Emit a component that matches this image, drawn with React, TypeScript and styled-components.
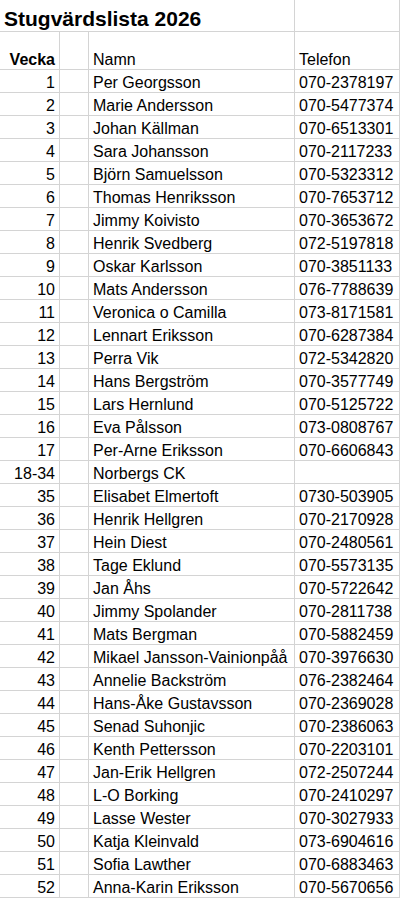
import React from "react";
import styled, { createGlobalStyle } from "styled-components";

const Global = createGlobalStyle`
  html, body { margin: 0; padding: 0; background: #ffffff; }
  body { font-family: "Liberation Sans", Arial, sans-serif; color: #000; }
`;

const Sheet = styled.div`
  display: grid;
  grid-template-columns: 60px 29px 206px 105px;
  width: 400px;
  font-family: "Liberation Sans", Arial, sans-serif;
  font-size: 16px;
  color: #000;
`;

const Cell = styled.div<{ $align?: "left" | "right"; $bold?: boolean; $h: number; $span?: number; $size?: number }>`
  box-sizing: border-box;
  height: ${(p) => p.$h}px;
  grid-column: span ${(p) => p.$span ?? 1};
  border-right: 1px solid #d4d4d4;
  border-bottom: 1px solid #d4d4d4;
  display: flex;
  align-items: flex-end;
  justify-content: ${(p) => (p.$align === "right" ? "flex-end" : "flex-start")};
  padding: 0 4px 0 4px;
  font-weight: ${(p) => (p.$bold ? 700 : 400)};
  font-size: ${(p) => p.$size ?? 16}px;
  line-height: ${(p) => (p.$size ? 24 : 18)}px;
  white-space: nowrap;
  overflow: hidden;
`;

const rows: [string, string, string][] = [
  ["1", "Per Georgsson", "070-2378197"],
  ["2", "Marie Andersson", "070-5477374"],
  ["3", "Johan Källman", "070-6513301"],
  ["4", "Sara Johansson", "070-2117233"],
  ["5", "Björn Samuelsson", "070-5323312"],
  ["6", "Thomas Henriksson", "070-7653712"],
  ["7", "Jimmy Koivisto", "070-3653672"],
  ["8", "Henrik Svedberg", "072-5197818"],
  ["9", "Oskar Karlsson", "070-3851133"],
  ["10", "Mats Andersson", "076-7788639"],
  ["11", "Veronica o Camilla", "073-8171581"],
  ["12", "Lennart Eriksson", "070-6287384"],
  ["13", "Perra Vik", "072-5342820"],
  ["14", "Hans Bergström", "070-3577749"],
  ["15", "Lars Hernlund", "070-5125722"],
  ["16", "Eva Pålsson", "073-0808767"],
  ["17", "Per-Arne Eriksson", "070-6606843"],
  ["18-34", "Norbergs CK", ""],
  ["35", "Elisabet Elmertoft", "0730-503905"],
  ["36", "Henrik Hellgren", "070-2170928"],
  ["37", "Hein Diest", "070-2480561"],
  ["38", "Tage Eklund", "070-5573135"],
  ["39", "Jan Åhs", "070-5722642"],
  ["40", "Jimmy Spolander", "070-2811738"],
  ["41", "Mats Bergman", "070-5882459"],
  ["42", "Mikael Jansson-Vainionpåå", "070-3976630"],
  ["43", "Annelie Backström", "076-2382464"],
  ["44", "Hans-Åke Gustavsson", "070-2369028"],
  ["45", "Senad Suhonjic", "070-2386063"],
  ["46", "Kenth Pettersson", "070-2203101"],
  ["47", "Jan-Erik Hellgren", "072-2507244"],
  ["48", "L-O Borking", "070-2410297"],
  ["49", "Lasse Wester", "070-3027933"],
  ["50", "Katja Kleinvald", "073-6904616"],
  ["51", "Sofia Lawther", "070-6883463"],
  ["52", "Anna-Karin Eriksson", "070-5670656"],
];

export default function App() {
  return (
    <>
      <Global />
      <Sheet>
        <Cell $h={32} $span={3} $bold $size={21}>
          Stugvärdslista 2026
        </Cell>
        <Cell $h={32} />
        <Cell $h={38} $align="right" $bold>
          Vecka
        </Cell>
        <Cell $h={38} />
        <Cell $h={38}>Namn</Cell>
        <Cell $h={38}>Telefon</Cell>
        {rows.map(([w, n, t]) => (
          <React.Fragment key={w}>
            <Cell $h={23} $align="right">{w}</Cell>
            <Cell $h={23} />
            <Cell $h={23}>{n}</Cell>
            <Cell $h={23}>{t}</Cell>
          </React.Fragment>
        ))}
      </Sheet>
    </>
  );
}
